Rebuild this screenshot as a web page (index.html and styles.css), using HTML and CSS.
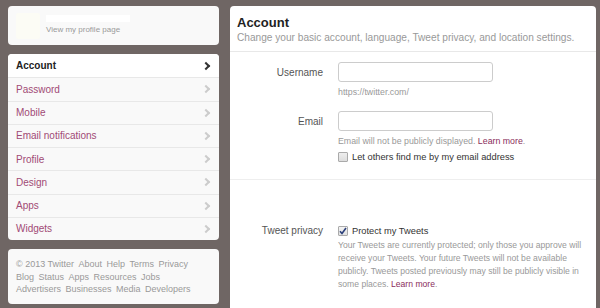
FILE: index.html
```html
<!DOCTYPE html>
<html lang="en">
<head>
  <meta charset="UTF-8" />
  <meta name="viewport" content="width=device-width, initial-scale=1.0" />
  <title>Settings – Account</title>
  <link rel="stylesheet" href="styles.css">
</head>
<body>
  <div class="page">
    <aside class="sidebar">
      <div class="card profile-card">
        <div class="avatar"></div>
        <div class="profile-info">
          <div class="profile-name"></div>
          <a class="profile-link" href="#">View my profile page</a>
        </div>
      </div>

      <ul class="card nav-list">
        <li class="active"><a href="#">Account</a><span class="chev"></span></li>
        <li><a href="#">Password</a><span class="chev"></span></li>
        <li><a href="#">Mobile</a><span class="chev"></span></li>
        <li><a href="#">Email notifications</a><span class="chev"></span></li>
        <li><a href="#">Profile</a><span class="chev"></span></li>
        <li><a href="#">Design</a><span class="chev"></span></li>
        <li><a href="#">Apps</a><span class="chev"></span></li>
        <li><a href="#">Widgets</a><span class="chev"></span></li>
      </ul>

      <div class="card footer-card">
        <div class="footer-line"><span>&copy; 2013 Twitter</span><a href="#">About</a><a href="#">Help</a><a href="#">Terms</a><a href="#">Privacy</a></div>
        <div class="footer-line"><a href="#">Blog</a><a href="#">Status</a><a href="#">Apps</a><a href="#">Resources</a><a href="#">Jobs</a></div>
        <div class="footer-line"><a href="#">Advertisers</a><a href="#">Businesses</a><a href="#">Media</a><a href="#">Developers</a></div>
      </div>
    </aside>

    <main class="card content">
      <div class="content-header">
        <h2>Account</h2>
        <p>Change your basic account, language, Tweet privacy, and location settings.</p>
      </div>

      <section class="form-section">
        <div class="field">
          <label class="field-label" for="username">Username</label>
          <div class="field-control">
            <input id="username" type="text">
            <p class="hint">https://twitter.com/</p>
          </div>
        </div>

        <div class="field">
          <label class="field-label" for="email">Email</label>
          <div class="field-control">
            <input id="email" type="text">
            <p class="hint">Email will not be publicly displayed. <a href="#">Learn more</a>.</p>
            <div class="check-row">
              <span class="checkbox"></span>
              <span>Let others find me by my email address</span>
            </div>
          </div>
        </div>
      </section>

      <section class="form-section privacy">
        <div class="field">
          <span class="field-label">Tweet privacy</span>
          <div class="field-control">
            <div class="check-row">
              <span class="checkbox checked">
                <svg width="8" height="8" viewBox="0 0 8 8"><path d="M1 4.2 L3 6.5 L7 1" fill="none" stroke="#2b3f7a" stroke-width="1.6"/></svg>
              </span>
              <span>Protect my Tweets</span>
            </div>
            <p class="hint desc">Your Tweets are currently protected; only those you approve will<br>receive your Tweets. Your future Tweets will not be available<br>publicly. Tweets posted previously may still be publicly visible in<br>some places. <a href="#">Learn more</a>.</p>
          </div>
        </div>
      </section>
    </main>
  </div>
</body>
</html>
```

FILE: styles.css
```css
* {
  margin: 0;
  padding: 0;
  box-sizing: border-box;
}
body {
  background: #6f6664;
  font-family: 'Liberation Sans', Arial, sans-serif;
  color: #333;
  overflow: hidden;
}
a {
  text-decoration: none;
}
.page {
  display: flex;
  gap: 11px;
  padding: 6px 4px 0 8px;
}
.sidebar {
  width: 211px;
  flex-shrink: 0;
  display: flex;
  flex-direction: column;
  gap: 9px;
}
.card {
  background: #f9f9f9;
  border-radius: 4px;
}
.profile-card {
  height: 39px;
  display: flex;
  align-items: center;
  gap: 6px;
  padding: 0 8px;
}
.avatar {
  width: 24px;
  height: 26px;
  background: #fcfcf5;
  border-radius: 2px;
}
.profile-name {
  width: 84px;
  height: 7px;
  background: #ffffff;
  margin-bottom: 3px;
}
.profile-link {
  display: block;
  font-size: 8px;
  color: #999;
  margin-bottom: 2px;
}
.nav-list {
  list-style: none;
  overflow: hidden;
  height: 186px;
}
.nav-list li {
  height: 23.25px;
  display: flex;
  align-items: center;
  justify-content: space-between;
  padding: 0 10px 0 8px;
  border-top: 1px solid #e8e8e8;
}
.nav-list li:first-child {
  border-top: none;
}
.nav-list a {
  font-size: 10px;
  color: #a14a75;
}
.nav-list li.active {
  background: #fff;
}
.nav-list li.active a {
  color: #222;
  font-weight: bold;
}
.chev {
  width: 6px;
  height: 6px;
  border-right: 2px solid #ccc;
  border-top: 2px solid #ccc;
  transform: rotate(45deg);
}
.active .chev {
  border-color: #333;
}
.footer-card {
  height: 55px;
  padding: 9px 8px 0;
  font-size: 9px;
  line-height: 12.5px;
  color: #999;
}
.footer-line {
  display: flex;
  gap: 4.5px;
}
.footer-card a {
  color: #999;
}
.content {
  flex: 1;
  height: 310px;
  background: #fff;
}
.content-header {
  padding: 9px 7px 0;
  height: 46px;
  border-bottom: 1px solid #e8e8e8;
}
.content-header h2 {
  font-size: 13px;
  color: #222;
  line-height: 15px;
}
.content-header p {
  margin-top: 2px;
  font-size: 10.15px;
  color: #999;
}
.form-section {
  padding: 10px 0 15px;
  border-bottom: 1px solid #eee;
}
.field {
  display: grid;
  grid-template-columns: 93px 1fr;
  column-gap: 15px;
  margin-bottom: 13px;
}
.field:last-child {
  margin-bottom: 0;
}
.field-label {
  text-align: right;
  font-size: 10px;
  color: #555;
  line-height: 21px;
}
.field-control input {
  width: 155px;
  height: 20px;
  border: 1px solid #ccc;
  border-radius: 3px;
  background: #fff;
}
.hint {
  font-size: 8.8px;
  color: #999;
  line-height: 12px;
  margin-top: 4px;
}
.hint a {
  color: #8a2e5c;
}
.check-row {
  display: flex;
  align-items: center;
  gap: 4px;
  font-size: 9.3px;
  color: #333;
  margin-top: 3px;
  line-height: 14px;
}
.checkbox {
  width: 10px;
  height: 10px;
  border: 1px solid #aaa;
  border-radius: 1px;
  background: linear-gradient(#eee, #ddd);
  display: flex;
  align-items: center;
  justify-content: center;
}
.checkbox.checked {
  background: linear-gradient(#f4f4f4, #e2e2e2);
}
.privacy {
  border-bottom: none;
  padding-top: 41px;
}
.privacy .field-label {
  line-height: 14px;
  margin-top: 3px;
}
.desc {
  font-size: 8.6px;
  line-height: 13px;
  margin-top: 1px;
}
```
